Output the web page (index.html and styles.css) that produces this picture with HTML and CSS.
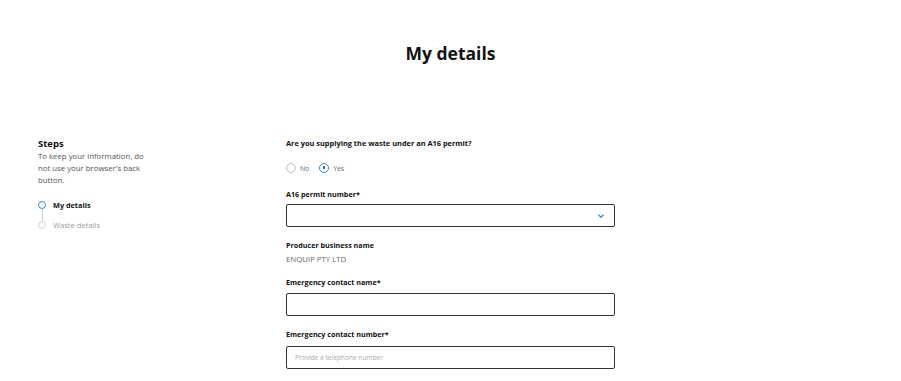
FILE: index.html
```html
<!DOCTYPE html>
<html lang="en">
<head>
<meta charset="utf-8">
<title>My details</title>
<link rel="stylesheet" href="styles.css">
</head>
<body>
<div class="page">
  <h1 class="title">My details</h1>
  <div class="layout">
    <aside class="steps">
      <h2 class="steps-title">Steps</h2>
      <p class="steps-desc">To keep your information, do not use your browser's back button.</p>
      <ol class="step-list">
        <li class="step step-active"><span class="step-dot"></span><span class="step-label">My details</span></li>
        <li class="step step-todo"><span class="step-dot"></span><span class="step-label">Waste details</span></li>
      </ol>
    </aside>
    <main class="form">
      <div class="field">
        <div class="label label-question">Are you supplying the waste under an A16 permit?</div>
        <div class="radios">
          <label class="radio"><span class="radio-circle"></span>No</label>
          <label class="radio radio-checked"><span class="radio-circle"></span>Yes</label>
        </div>
      </div>
      <div class="field">
        <div class="label">A16 permit number*</div>
        <div class="box select">
          <svg class="chevron" width="8" height="6" viewBox="0 0 8 6"><path d="M1.5 1.8 L4 4.2 L6.5 1.8" fill="none" stroke="#3a8fd6" stroke-width="1.4"/></svg>
        </div>
      </div>
      <div class="field">
        <div class="label">Producer business name</div>
        <div class="value">ENQUIP PTY LTD</div>
      </div>
      <div class="field">
        <div class="label">Emergency contact name*</div>
        <div class="box"></div>
      </div>
      <div class="field field-last">
        <div class="label">Emergency contact number*</div>
        <div class="box box-spaced"><span class="placeholder">Provide a telephone number</span></div>
      </div>
    </main>
  </div>
</div>
</body>
</html>
```
FILE: styles.css
```css
* { box-sizing: border-box; }
html, body { margin: 0; padding: 0; background: #fff; }
body { font-family: "Open Sans", "Liberation Sans", sans-serif; color: #1a1a1a; }
.page { width: 901px; }
.title {
  margin: 0;
  padding-top: 41px;
  text-align: center;
  font-size: 17.5px;
  font-weight: 700;
  line-height: 24px;
  color: #111;
}
.layout {
  display: flex;
  padding-left: 38px;
  margin-top: 72px;
}
.steps { width: 248px; }
.steps-title { margin: 0; font-size: 9.5px; font-weight: 700; line-height: 13px; color: #111; }
.steps-desc { margin: 0; width: 112px; font-size: 7.8px; line-height: 12px; color: #555; }
.step-list { list-style: none; margin: 9px 0 0; padding: 0; }
.step { display: flex; align-items: center; height: 20px; position: relative; font-size: 7.3px; }
.step-dot {
  width: 8px; height: 8px; border-radius: 50%;
  margin-right: 7px; background: #fff; position: relative; z-index: 1;
}
.step-active .step-dot { border: 1.6px solid #2f8fd5; }
.step-todo .step-dot { border: 1px solid #d0d0d0; }
.step-active .step-label { font-weight: 700; color: #111; }
.step-todo .step-label { color: #9a9a9a; font-size: 7.6px; }
.step-active::after {
  content: ""; position: absolute; left: 3.5px; top: 14px; width: 1px; height: 12px; background: #d0d0d0;
}
.form { width: 329px; padding-top: 1px; }
.field { margin-bottom: 13px; }
.field-last { margin-top: 1px; }
.label { font-size: 7.2px; font-weight: 700; line-height: 10px; color: #111; }
.label-question { font-size: 7.4px; }
.radios { display: flex; gap: 10px; margin-top: 15px; padding-bottom: 3px; font-size: 6.8px; color: #666; }
.radio { display: flex; align-items: center; }
.radio-circle {
  width: 10px; height: 10px; border-radius: 50%; border: 1px solid #bbb; margin-right: 4px; position: relative;
}
.radio-checked .radio-circle { border: 1.4px solid #2f8fd5; }
.radio-checked .radio-circle::after {
  content: ""; position: absolute; left: 2.3px; top: 2.3px; width: 2.6px; height: 2.6px; border-radius: 50%; background: #1f5c99;
}
.box {
  margin-top: 6px;
  height: 23px;
  border: 1.5px solid #333;
  border-radius: 2px;
  display: flex;
  align-items: center;
  padding: 0 8px;
}
.box-spaced { margin-top: 7px; }
.select { justify-content: flex-end; padding-right: 9px; margin-top: 5px; }
.value { margin-top: 4px; font-size: 7.8px; color: #666; line-height: 10px; }
.placeholder { font-size: 6.6px; color: #aaa; }
```
